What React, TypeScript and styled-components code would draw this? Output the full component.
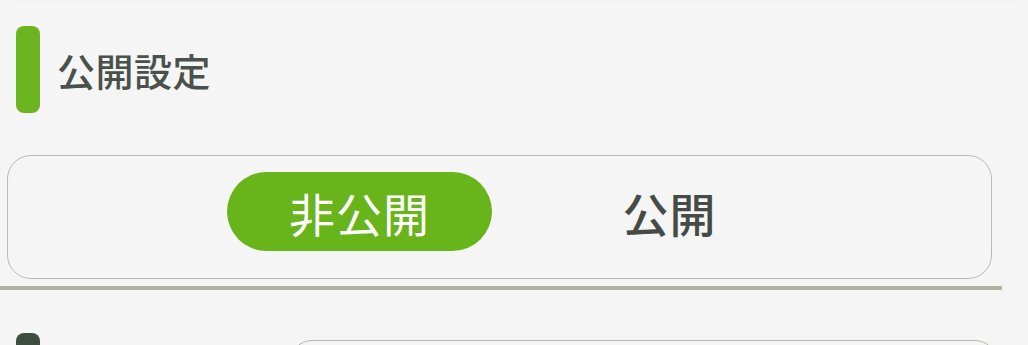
import styled, { createGlobalStyle } from "styled-components"

const GlobalStyle = createGlobalStyle`
  html, body {
    margin: 0;
    padding: 0;
    background: #f5f5f5;
  }

  body {
    font-family: "Noto Sans CJK JP", "Noto Sans", sans-serif;
    overflow: hidden;
  }
`

const Page = styled.div`
  width: 1028px;
  height: 345px;
  overflow: hidden;
`

const TopRule = styled.div`
  height: 1px;
  margin: 1px 14px 0 12px;
  background: #f0eeea;
`

const SectionHeader = styled.div`
  display: flex;
  align-items: center;
  gap: 17px;
  margin-top: 24px;
  padding-left: 16px;
`

const Marker = styled.div<{ $tone: "active" | "muted" }>`
  width: 24px;
  height: 87px;
  border-radius: 8px;
  flex-shrink: 0;
  background: ${({ $tone }) => ($tone === "active" ? "#6cb520" : "#3e4f41")};
`

const SectionTitle = styled.h2`
  margin: 0;
  font-size: 38px;
  font-weight: 500;
  line-height: 1;
  color: #4a514a;
  letter-spacing: 0.5px;
`

const SegmentCard = styled.div`
  display: flex;
  gap: 45px;
  box-sizing: border-box;
  width: 985px;
  height: 124px;
  margin: 42px 0 0 7px;
  padding: 16px 0 0 219px;
  border: 1px solid #b9bab2;
  border-radius: 24px;
`

const SegmentOption = styled.button<{ $selected?: boolean }>`
  display: flex;
  align-items: center;
  justify-content: center;
  width: 265px;
  height: 79px;
  padding: 0;
  border: none;
  border-radius: 40px;
  font-family: inherit;
  font-size: 46px;
  font-weight: ${({ $selected }) => ($selected ? 400 : 500)};
  line-height: 1;
  letter-spacing: 1px;
  cursor: pointer;
  background: ${({ $selected }) => ($selected ? "#68b41b" : "transparent")};
  color: ${({ $selected }) => ($selected ? "#ffffff" : "#454c45")};
`

const Divider = styled.div`
  width: 1002px;
  height: 4px;
  margin-top: 7px;
  background: #afb4a5;
`

const FieldRow = styled.div`
  display: flex;
  align-items: flex-start;
  gap: 250px;
  margin-top: 43px;
  padding-left: 16px;
`

const FieldBox = styled.div`
  width: 707px;
  height: 80px;
  margin-top: 7px;
  box-sizing: border-box;
  border: 1px solid #b5b6ae;
  border-radius: 22px;
`

export default function App() {
  return (
    <Page>
      <GlobalStyle />
      <TopRule />
      <SectionHeader>
        <Marker $tone="active" />
        <SectionTitle>公開設定</SectionTitle>
      </SectionHeader>
      <SegmentCard>
        <SegmentOption type="button" $selected>
          非公開
        </SegmentOption>
        <SegmentOption type="button">公開</SegmentOption>
      </SegmentCard>
      <Divider />
      <FieldRow>
        <Marker $tone="muted" />
        <FieldBox />
      </FieldRow>
    </Page>
  )
}
